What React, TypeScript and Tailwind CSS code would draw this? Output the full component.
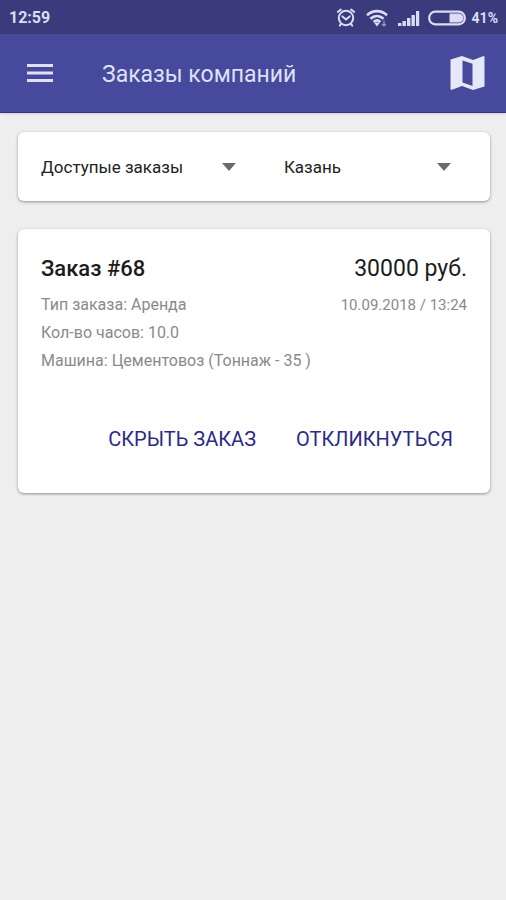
import { useState } from "react";

const cities = ["Казань", "Москва", "Самара"];
const filters = ["Доступые заказы", "Мои заказы"];

const orders = [
  {
    id: 68,
    price: "30000 руб.",
    date: "10.09.2018 / 13:24",
    details: [
      "Тип заказа: Аренда",
      "Кол-во часов: 10.0",
      "Машина: Цементовоз (Тоннаж - 35 )",
    ],
  },
];

function StatusBar() {
  return (
    <div className="flex h-[34px] items-center justify-between bg-[#393b7c] pl-[9px] pr-2 pt-0.5 text-[#dcdcf4]">
      <span className="text-base font-bold">12:59</span>
      <div className="flex items-center">
        {/* Alarm */}
        <svg width="20" height="20" viewBox="0 0 20 20" fill="none" stroke="currentColor" strokeWidth="2" strokeLinecap="round">
          <circle cx="10" cy="10" r="7.2" />
          <path d="M6.4 8.4 10 11.4l3.6-3M1.8 4 4.8 1.6M18.2 4l-3-2.4M5 16l-1.2 1.6M15 16l1.2 1.6" />
        </svg>
        {/* Wi-Fi */}
        <svg className="ml-2.5" width="22" height="18" viewBox="0 0 22 18" fill="none" stroke="currentColor" strokeWidth="2.6">
          <path d="M1 6.2C7 .8 15 .8 21 6.2M4.4 9.8c4-3.6 9.2-3.6 13.2 0M7.6 13c2-1.8 4.8-1.8 6.8 0" />
          <path d="M8 13.6h6L11 17.4z" fill="currentColor" stroke="none" />
          <path d="M18 11.5v5.4M16 15l2 2 2-2" strokeWidth="1.2" opacity=".6" />
        </svg>
        {/* Signal */}
        <svg className="ml-2.5" width="22" height="16" viewBox="0 0 22 16" fill="currentColor">
          <path d="M0 13h3.4v3H0zM4.5 11h3.4v5H4.5zM9 8h3.4v8H9zM13.5 5h3.4v11h-3.4zM18 1h3.2v15H18z" />
        </svg>
        {/* Battery */}
        <svg className="ml-2" width="38" height="16" viewBox="0 0 38 16">
          <rect x="1.2" y="1.7" width="35.6" height="12.6" rx="6" fill="none" stroke="currentColor" strokeWidth="2.2" />
          <path d="M21.5 3.6H31a4.4 4.4 0 0 1 0 8.8h-9.5z" fill="currentColor" />
        </svg>
        <span className="ml-1.5 text-sm font-bold">41%</span>
      </div>
    </div>
  );
}

function Header() {
  return (
    <header className="flex h-[79px] items-center border-b border-[#34358a] bg-[#46499c] pl-[26px] pr-[21px] text-[#dfe0f6] shadow">
      <button type="button" aria-label="Меню" className="cursor-pointer">
        <svg width="28" height="20" viewBox="0 0 28 20" fill="currentColor">
          <path d="M1 1h26v3H1zM1 8.5h26v3H1zM1 16h26v3H1z" />
        </svg>
      </button>
      <h1 className="ml-12 flex-1 pt-1 text-[23px] leading-8">Заказы компаний</h1>
      <button type="button" aria-label="Карта" className="cursor-pointer text-[#e6e8f8]">
        <svg width="35" height="36" viewBox="0 0 35 36" fill="currentColor">
          <path
            fillRule="evenodd"
            d="M.5 4.5 12 1l11 4L33 1.2q1.5-.4 1.5 1.2v29L23 35l-11-4-10 3.8q-1.5.4-1.5-1.2zM12.5 5.4v22.2l10 3.4V8.8z"
          />
        </svg>
      </button>
    </header>
  );
}

type DropdownProps = {
  label: string;
  options: string[];
  className: string;
};

function Dropdown({ label, options, className }: DropdownProps) {
  const [value, setValue] = useState(options[0]);

  return (
    <div className={`relative flex items-center ${className}`}>
      <select
        aria-label={label}
        value={value}
        onChange={(e) => setValue(e.target.value)}
        className="w-full cursor-pointer appearance-none bg-transparent pr-5 text-[17px] leading-6 text-[#222] outline-none"
      >
        {options.map((option) => (
          <option key={option}>{option}</option>
        ))}
      </select>
      <svg className="pointer-events-none absolute right-0" width="14" height="8" viewBox="0 0 14 8" fill="#6b6b6b">
        <path d="M0 0h14L7 8z" />
      </svg>
    </div>
  );
}

export default function App() {
  return (
    <div className="min-h-screen bg-[#eeeeee] font-['Roboto','Noto_Sans',sans-serif]">
      <StatusBar />
      <Header />

      <main className="flex flex-col gap-7 py-[19px] pl-[18px] pr-4">
        <div className="flex h-[69px] gap-12 rounded-md bg-white pl-[23px] pr-[39px] shadow-[0_1px_3px_rgba(0,0,0,0.4)]">
          <Dropdown label="Заказы" options={filters} className="flex-[7]" />
          <Dropdown label="Город" options={cities} className="flex-[6]" />
        </div>

        {orders.map((order) => (
          <article key={order.id} className="rounded-md bg-white px-[23px] pb-9 pt-6 shadow-[0_1px_3px_rgba(0,0,0,0.4)]">
            <div className="flex items-center justify-between leading-8 text-[#1c1c1c]">
              <h2 className="text-[22px] font-medium leading-8">Заказ #{order.id}</h2>
              <span className="text-[23px] leading-8">{order.price}</span>
            </div>
            <div className="mt-1.5 flex justify-between text-[#8a8a8a]">
              <div className="text-base leading-7">
                {order.details.map((line) => (
                  <p key={line}>{line}</p>
                ))}
              </div>
              <time className="text-[15px] leading-7">{order.date}</time>
            </div>
            <div className="mt-[46px] flex justify-end gap-10 pr-3.5 text-xl leading-9 text-[#2c2a86]">
              <button type="button" className="cursor-pointer">СКРЫТЬ ЗАКАЗ</button>
              <button type="button" className="cursor-pointer">ОТКЛИКНУТЬСЯ</button>
            </div>
          </article>
        ))}
      </main>
    </div>
  );
}
